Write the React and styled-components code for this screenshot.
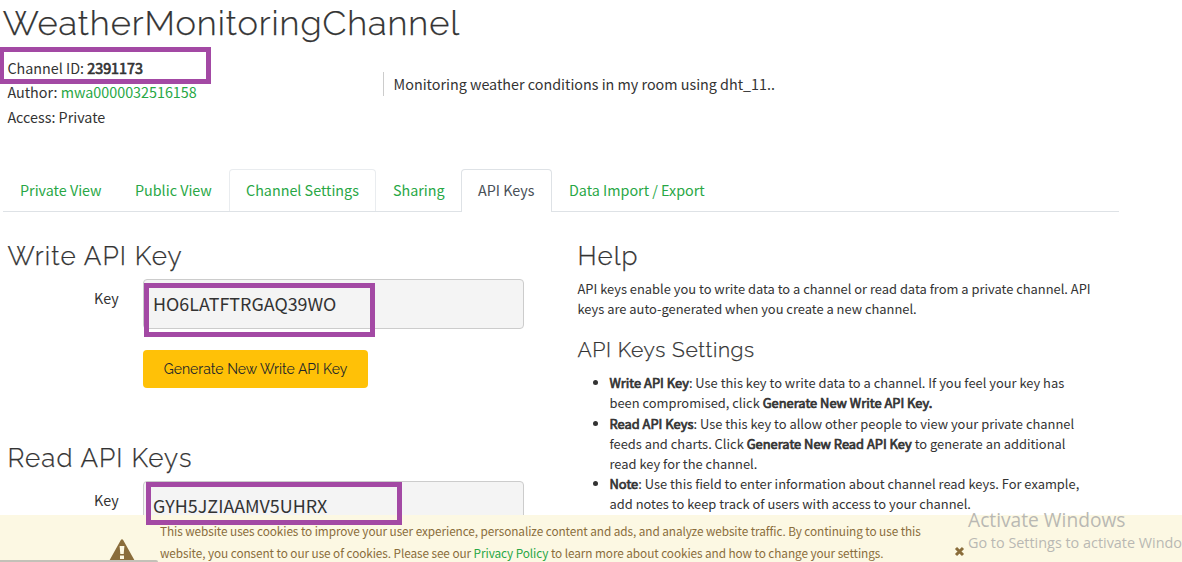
import React from 'react';
import styled, { createGlobalStyle } from 'styled-components';

const Global = createGlobalStyle`
  * { box-sizing: border-box; }
  body {
    margin: 0;
    background: #fff;
    color: #333;
    font-family: "Noto Sans CJK SC", "Noto Sans", sans-serif;
    font-size: 14.33px;
  }
  h1, h2, h3, p, ul { margin: 0; padding: 0; }
`;

const Page = styled.div`
  position: relative;
  width: 1182px;
  height: 562px;
  overflow: hidden;
`;

const Heading = styled.h2`
  font-family: Raleway, Lato, sans-serif;
  font-weight: 300;
  font-size: ${(p) => p.$size}px;
  line-height: ${(p) => p.$line}px;
  letter-spacing: ${(p) => p.$track}px;
  -webkit-text-stroke: 0.25px currentColor;
  white-space: nowrap;
`;

const Header = styled.header`
  height: 169px;
  padding-left: 2.8px;
`;

const Summary = styled.div`
  display: flex;
  padding: 9px 0 0 4.6px;
`;

const Meta = styled.div`
  width: 375.6px;
  line-height: 24.4px;
`;

const Description = styled.p`
  align-self: flex-start;
  margin-top: 16px;
  padding-left: 9.6px;
  border-left: 1px solid #ccc;
  line-height: 24px;
`;

const Link = styled.a`
  color: #28a745;
`;

const Strong = styled.b`
  font-weight: 400;
  -webkit-text-stroke: 0.7px currentColor;
`;

const Tabs = styled.nav`
  display: flex;
  width: 1116px;
  height: 43px;
  margin-left: 3px;
  border-bottom: 1px solid #dee2e6;
`;

const Tab = styled.div`
  width: ${(p) => p.$width}px;
  height: ${(p) => (p.$active ? 43 : 42)}px;
  padding: 8px 0 0 16px;
  line-height: 24px;
  white-space: nowrap;
  color: ${(p) => (p.$active ? '#495057' : '#28a745')};
  background: #fff;
  border: 1px solid ${(p) => (p.$active ? '#dee2e6' : p.$hover ? '#e9ecef' : 'transparent')};
  border-bottom: 0;
  border-radius: 4px 4px 0 0;
`;

const Columns = styled.main`
  display: flex;
  padding: 28px 0 0 7.5px;
`;

const Keys = styled.section`
  width: 570px;
`;

const KeyGroup = styled.div`
  height: 202px;
`;

const KeyRow = styled.div`
  display: flex;
  margin-top: 7px;
`;

const Label = styled.label`
  width: 135.5px;
  padding: 7px 24.3px 0 0;
  line-height: 24px;
  text-align: right;
`;

const KeyField = styled.div`
  width: 381px;
  height: 50px;
  padding: 0 9px;
  line-height: 47px;
  font-size: 17.9px;
  border: 1px solid #ccc;
  border-radius: 4px;
  background: #f4f4f4;
`;

const Button = styled.button`
  display: block;
  width: 225px;
  height: 38px;
  margin: 21px 0 0 135.5px;
  padding: 0;
  border: 0;
  border-radius: 4px;
  background: #ffc107;
  color: #212529;
  font: 400 14px/36px Raleway, Lato, sans-serif;
`;

const Help = styled.section`
  width: 540px;
  font-size: 12.9px;
  line-height: 20.15px;
  white-space: nowrap;
`;

const Intro = styled.p`
  margin: 7px 0 19px;
`;

const Notes = styled.ul`
  margin-top: 11px;
  padding-left: 32px;
`;

const Banner = styled.footer`
  position: absolute;
  left: 0;
  right: 0;
  bottom: 0;
  display: flex;
  height: 47px;
  background: #fcf8e3;
  color: #8a6d3b;
  font-size: 11.8px;
  letter-spacing: -0.08px;
  line-height: 22px;
  white-space: nowrap;
`;

const Warning = styled.svg`
  width: 26px;
  height: 23px;
  margin: 24px 25px 0 109px;
`;

const BannerText = styled.p`
  width: 794px;
  padding-top: 5px;
`;

const Close = styled.svg`
  width: 11px;
  height: 11px;
  margin-top: 31px;
`;

const StatusEdge = styled.div`
  position: absolute;
  left: 0;
  bottom: 0;
  width: 158px;
  height: 2px;
  background: #c3c1b8;
  border-top-right-radius: 3px;
`;

const Marker = styled.div`
  position: absolute;
  left: ${(p) => p.$x}px;
  top: ${(p) => p.$y}px;
  width: ${(p) => p.$w}px;
  height: ${(p) => p.$h}px;
  border: 5px solid #a349a4;
`;

const Watermark = styled.div`
  position: absolute;
  left: 968px;
  top: 508px;
  color: #b9b8b3;
  font-family: "Open Sans", sans-serif;
  font-size: 14.4px;
  line-height: 22px;
  white-space: nowrap;
`;

const WatermarkTitle = styled.div`
  font-size: 19.2px;
  line-height: 24px;
`;

export default function App() {
  return (
    <Page>
      <Global />
      <Header>
        <Heading as="h1" $size={34.5} $line={47} $track={0.95}>WeatherMonitoringChannel</Heading>
        <Summary>
          <Meta>
            <div>Channel ID: <Strong>2391173</Strong></div>
            <div>Author: <Link>mwa0000032516158</Link></div>
            <div>Access: Private</div>
          </Meta>
          <Description>Monitoring weather conditions in my room using dht_11..</Description>
        </Summary>
      </Header>
      <Tabs>
        <Tab $width={115}>Private View</Tab>
        <Tab $width={111}>Public View</Tab>
        <Tab $width={147} $hover>Channel Settings</Tab>
        <Tab $width={85}>Sharing</Tab>
        <Tab $width={91} $active>API Keys</Tab>
        <Tab $width={170}>Data Import / Export</Tab>
      </Tabs>
      <Columns>
        <Keys>
          <KeyGroup>
            <Heading $size={26} $line={32} $track={1.13}>Write API Key</Heading>
            <KeyRow>
              <Label>Key</Label>
              <KeyField>HO6LATFTRGAQ39WO</KeyField>
            </KeyRow>
            <Button>Generate New Write API Key</Button>
          </KeyGroup>
          <KeyGroup>
            <Heading $size={26} $line={32} $track={1.1}>Read API Keys</Heading>
            <KeyRow>
              <Label>Key</Label>
              <KeyField>GYH5JZIAAMV5UHRX</KeyField>
            </KeyRow>
          </KeyGroup>
        </Keys>
        <Help>
          <Heading $size={26} $line={32} $track={1.1}>Help</Heading>
          <Intro>
            API keys enable you to write data to a channel or read data from a private channel. API<br />
            keys are auto-generated when you create a new channel.
          </Intro>
          <Heading as="h3" $size={21} $line={24} $track={0.64}>API Keys Settings</Heading>
          <Notes>
            <li>
              <Strong>Write API Key</Strong>: Use this key to write data to a channel. If you feel your key has<br />
              been compromised, click <Strong>Generate New Write API Key.</Strong>
            </li>
            <li>
              <Strong>Read API Keys</Strong>: Use this key to allow other people to view your private channel<br />
              feeds and charts. Click <Strong>Generate New Read API Key</Strong> to generate an additional<br />
              read key for the channel.
            </li>
            <li>
              <Strong>Note</Strong>: Use this field to enter information about channel read keys. For example,<br />
              add notes to keep track of users with access to your channel.
            </li>
          </Notes>
        </Help>
      </Columns>
      <Banner>
        <Warning viewBox="0 0 26 23">
          <path fill="#8a6d3b" fillRule="evenodd" d="M11.7 1.2Q13 -.9 14.3 1.2L25.6 21.5Q26.2 23 24.5 23H1.5Q-.2 23 .4 21.5ZM10.6 7L11.3 15H14.7L15.4 7ZM11 16.5V20H15V16.5Z" />
        </Warning>
        <BannerText>
          This website uses cookies to improve your user experience, personalize content and ads, and analyze website traffic. By continuing to use this<br />
          website, you consent to our use of cookies. Please see our <Link>Privacy Policy</Link> to learn more about cookies and how to change your settings.
        </BannerText>
        <Close viewBox="0 0 11 11">
          <path d="M2 2L9 9M9 2L2 9" stroke="#8a6d3b" strokeWidth="3" />
        </Close>
      </Banner>
      <StatusEdge />
      <Watermark>
        <WatermarkTitle>Activate Windows</WatermarkTitle>
        Go to Settings to activate Windows.
      </Watermark>
      <Marker $x={-1} $y={47} $w={212} $h={37} />
      <Marker $x={144} $y={283} $w={231} $h={54} />
      <Marker $x={146} $y={482} $w={256} $h={43} />
    </Page>
  );
}
